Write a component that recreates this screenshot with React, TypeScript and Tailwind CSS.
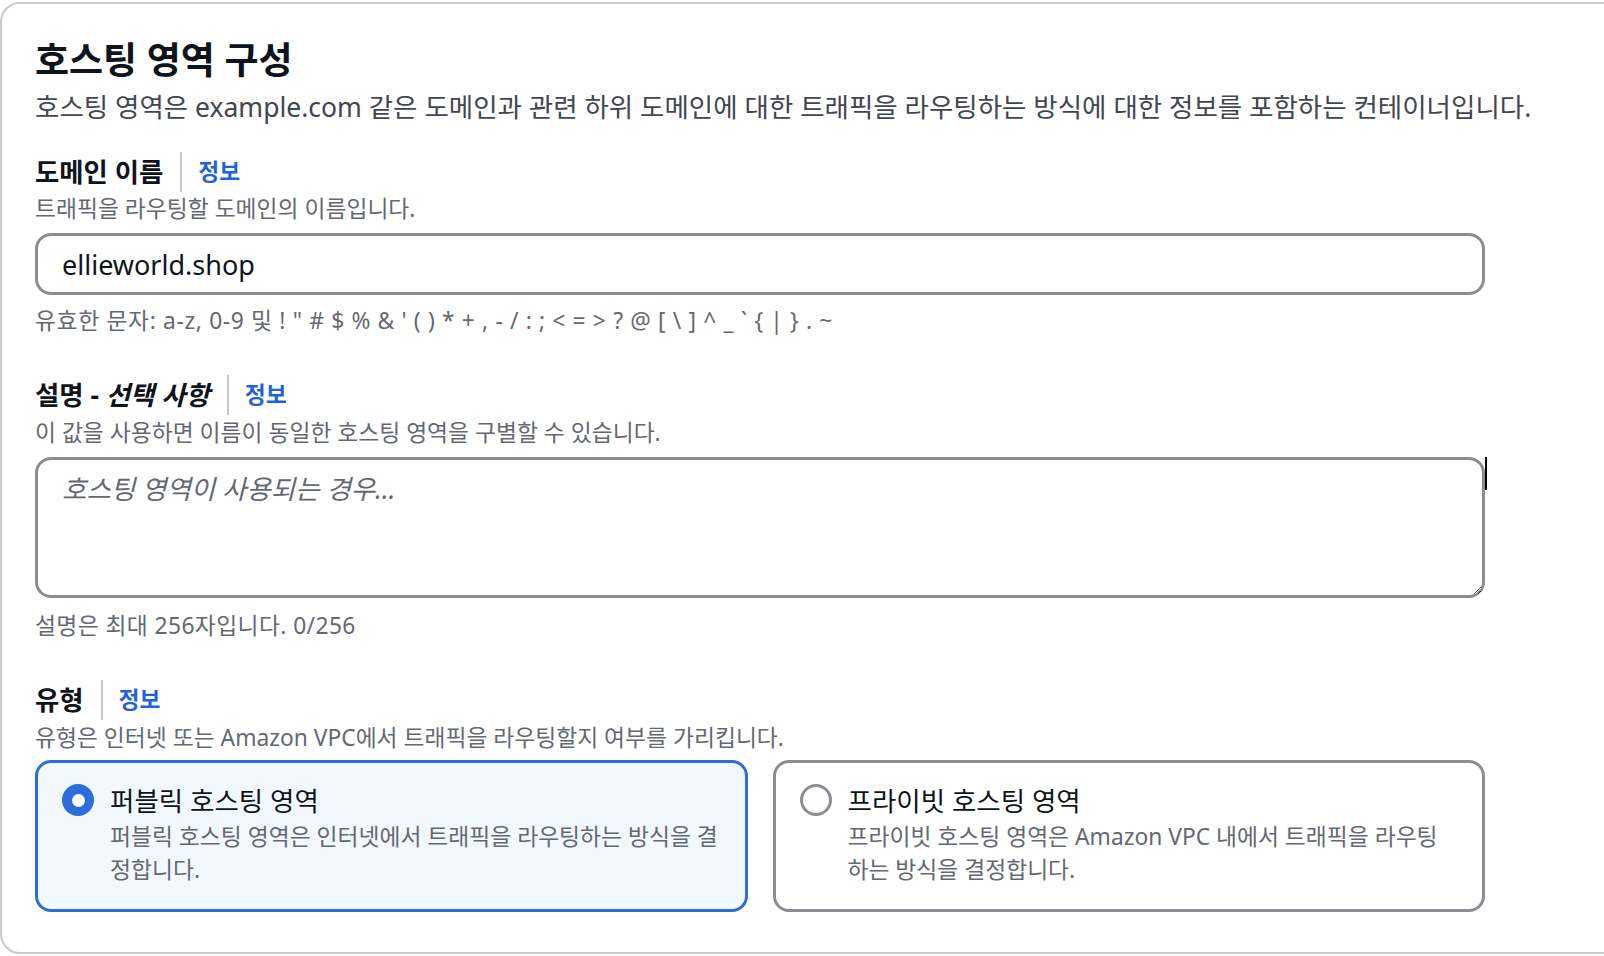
import React from 'react'

const BLUE = 'text-[#1f63d6]'

function FieldLabel({ children }: { children: React.ReactNode }) {
  return (
    <div className="flex h-[40px] items-center">
      <span className="text-[26.4px] font-bold leading-[34px] text-[#0f141a]">{children}</span>
      <span className="ml-[17px] mr-[16px] h-[40px] w-[2px] bg-[#c6c6cd]" />
      <a className={`text-[22.8px] font-semibold leading-[30px] ${BLUE}`}>정보</a>
    </div>
  )
}

function Hint({ children, className = '' }: { children: React.ReactNode; className?: string }) {
  return <p className={`text-[22.8px] leading-[30px] text-[#656871] ${className}`}>{children}</p>
}

interface RadioCardProps {
  selected: boolean
  title: string
  lines: string[]
}

function RadioCard({ selected, title, lines }: RadioCardProps) {
  return (
    <div
      className={
        selected
          ? 'flex rounded-[16px] border-[3px] border-[#2a6ddb] bg-[#f1f9ff] pb-[23px] pl-[24px] pr-[16px] pt-[21px]'
          : 'flex rounded-[16px] border-[3px] border-[#8c8c94] bg-white pb-[23px] pl-[24px] pr-[16px] pt-[21px]'
      }
    >
      {selected ? (
        <span className="flex h-[32px] w-[32px] shrink-0 items-center justify-center rounded-full bg-[#2a6ddb]">
          <span className="h-[13px] w-[13px] rounded-full bg-white" />
        </span>
      ) : (
        <span className="h-[32px] w-[32px] shrink-0 rounded-full border-[3.5px] border-[#8c8c94] bg-white" />
      )}
      <div className="ml-[16px]">
        <p className="text-[26.5px] leading-[34px] text-[#0f141a]">{title}</p>
        <p className="mt-[2px] text-[22.8px] leading-[33px] text-[#656871]">
          {lines.map((l, i) => (
            <React.Fragment key={i}>
              {i > 0 && <br />}
              {l}
            </React.Fragment>
          ))}
        </p>
      </div>
    </div>
  )
}

export default function App() {
  return (
    <div className="h-[956px] w-full overflow-hidden bg-white font-['Noto_Sans','Noto_Sans_CJK_KR',sans-serif]">
      <div className="mt-[2px] w-[1640px] rounded-[20px] border-2 border-[#c9c9d0] pb-[40px] pl-[33px] pt-[32px]">
        <div className="w-[1450px]">
          {/* Header */}
          <h2 className="text-[37px] font-bold leading-[48px] text-[#0f141a]">호스팅 영역 구성</h2>
          <p className="mt-[6px] whitespace-nowrap text-[26.5px] leading-[34px] text-[#424650]">
            호스팅 영역은 example.com 같은 도메인과 관련 하위 도메인에 대한 트래픽을 라우팅하는 방식에 대한 정보를 포함하는 컨테이너입니다.
          </p>

          {/* 도메인 이름 */}
          <div className="mt-[28px]">
            <FieldLabel>도메인 이름</FieldLabel>
          </div>
          <Hint className="mt-[2px]">트래픽을 라우팅할 도메인의 이름입니다.</Hint>
          <input
            defaultValue="ellieworld.shop"
            className="mt-[9px] block h-[62px] w-full rounded-[16px] border-[3px] border-[#8c8c94] bg-white pl-[24px] text-[27px] text-[#0f141a] outline-none"
          />
          <Hint className="mt-[11px] tracking-[0.65px]">
            {'유효한 문자: a-z, 0-9 및 ! " # $ % & \' ( ) * + , - / : ; < = > ? @ [ \\ ] ^ _ ` { | } . ~'}
          </Hint>

          {/* 설명 */}
          <div className="mt-[39px]">
            <FieldLabel>
              설명 - <i>선택 사항</i>
            </FieldLabel>
          </div>
          <Hint className="mt-[3px]">이 값을 사용하면 이름이 동일한 호스팅 영역을 구별할 수 있습니다.</Hint>
          <div className="relative mt-[9px]">
            <textarea
              placeholder="호스팅 영역이 사용되는 경우..."
              className="block h-[141px] w-full rounded-[16px] border-[3px] border-[#8c8c94] bg-white pl-[24px] pt-[12px] text-[26.5px] leading-[34px] text-[#0f141a] outline-none placeholder:italic placeholder:text-[#656871]"
            />
            <span className="absolute right-[-2px] top-0 h-[33px] w-[2px] bg-black" />
          </div>
          <Hint className="mt-[13px] tracking-[0.4px]">설명은 최대 256자입니다. 0/256</Hint>

          {/* 유형 */}
          <div className="mt-[39px]">
            <FieldLabel>유형</FieldLabel>
          </div>
          <Hint className="mt-[3px]">유형은 인터넷 또는 Amazon VPC에서 트래픽을 라우팅할지 여부를 가리킵니다.</Hint>
          <div className="mt-[7px] grid grid-cols-2 gap-[25px]">
            <RadioCard
              selected
              title="퍼블릭 호스팅 영역"
              lines={['퍼블릭 호스팅 영역은 인터넷에서 트래픽을 라우팅하는 방식을 결', '정합니다.']}
            />
            <RadioCard
              selected={false}
              title="프라이빗 호스팅 영역"
              lines={['프라이빗 호스팅 영역은 Amazon VPC 내에서 트래픽을 라우팅', '하는 방식을 결정합니다.']}
            />
          </div>
        </div>
      </div>
    </div>
  )
}
